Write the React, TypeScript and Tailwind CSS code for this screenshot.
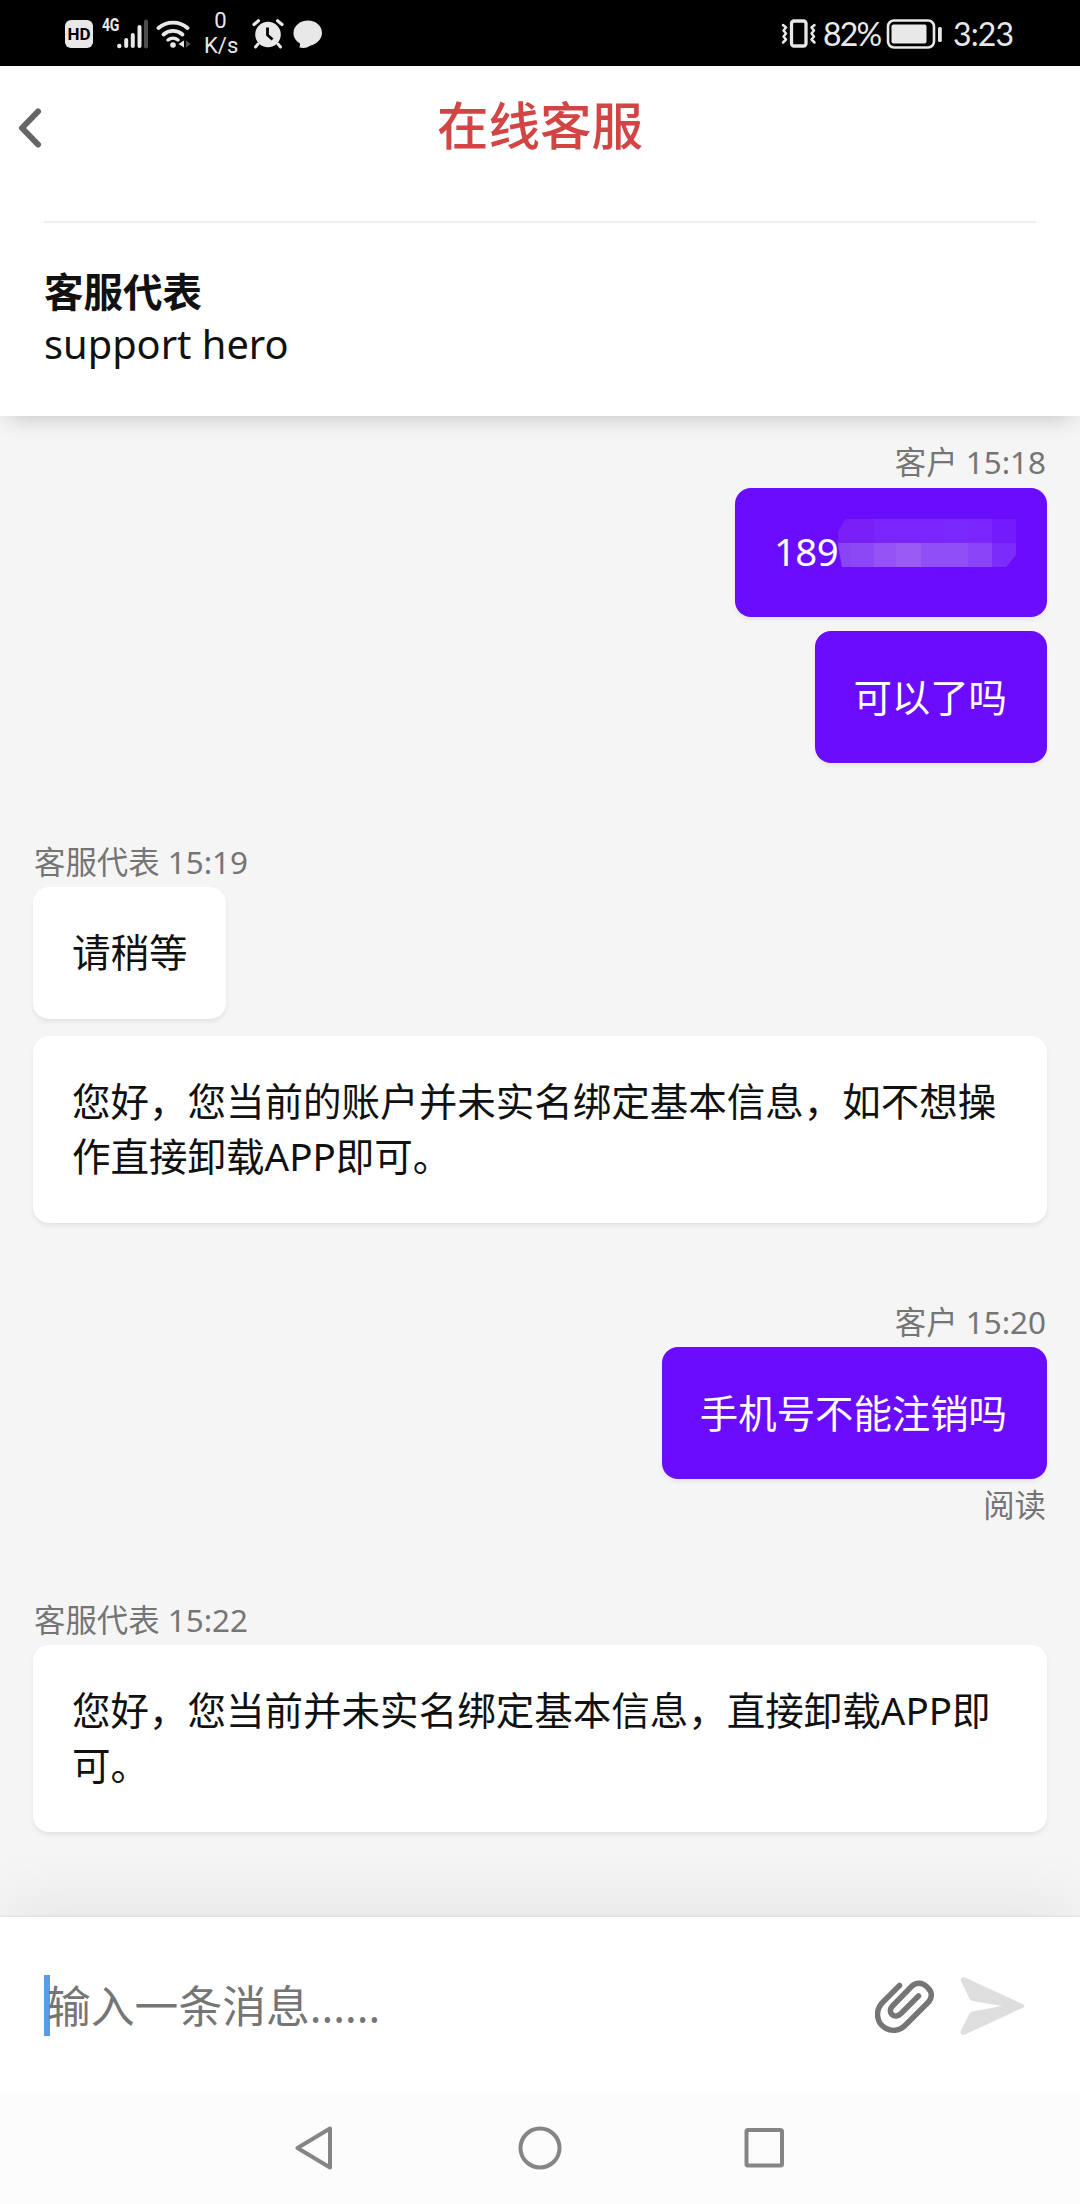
import React from "react";

type Message = {
  text: string;
  masked?: boolean;
};

type Group = {
  author: string;
  time: string;
  mine: boolean;
  status?: string;
  messages: Message[];
};

const groups: Group[] = [
  {
    author: "客户",
    time: "15:18",
    mine: true,
    messages: [{ text: "189", masked: true }, { text: "可以了吗" }],
  },
  {
    author: "客服代表",
    time: "15:19",
    mine: false,
    messages: [
      { text: "请稍等" },
      {
        text: "您好，您当前的账户并未实名绑定基本信息，如不想操作直接卸载APP即可。",
      },
    ],
  },
  {
    author: "客户",
    time: "15:20",
    mine: true,
    status: "阅读",
    messages: [{ text: "手机号不能注销吗" }],
  },
  {
    author: "客服代表",
    time: "15:22",
    mine: false,
    messages: [{ text: "您好，您当前并未实名绑定基本信息，直接卸载APP即可。" }],
  },
];

const StatusBar: React.FC = () => {
  return (
    <div className="flex h-[66px] shrink-0 items-center justify-between bg-black pl-[65px] pr-[65px] text-[#e8e8e8]">
      <div className="flex h-full items-center">
        <div className="mt-[2px] flex h-7 w-7 items-center justify-center rounded-[6px] bg-[#e8e8e8] font-['Roboto',sans-serif] text-[17px] font-bold leading-none text-black">
          HD
        </div>
        <div className="ml-[9px] mb-[16px] w-[15px] origin-left scale-x-[0.78] whitespace-nowrap font-['Roboto',sans-serif] text-[18px] font-bold leading-none tracking-[-0.5px]">
          4G
        </div>
        <svg width="31" height="30" viewBox="0 0 31 30" className="mt-[1px]">
          <circle cx="2.3" cy="27" r="2.2" fill="currentColor" />
          <path
            d="M9.2 21V27M15.8 16V27M22.5 8V27"
            stroke="currentColor"
            strokeWidth="4"
            strokeLinecap="round"
          />
          <path
            d="M29 2.500V27.500"
            stroke="#4d4d4d"
            strokeWidth="4"
            strokeLinecap="round"
          />
        </svg>
        <svg
          width="36"
          height="30"
          viewBox="0 0 36 30"
          className="ml-[8px] mt-[2px]"
          fill="none"
          stroke="currentColor"
          strokeLinecap="round"
        >
          <path d="M2.500 9A22 22 0 0 1 31.500 9" strokeWidth="3.800" />
          <path d="M7.500 15.500A14.500 14.500 0 0 1 26.500 15.500" strokeWidth="3.800" />
          <path d="M12 21A8 8 0 0 1 22 21" strokeWidth="3.500" />
          <circle cx="17" cy="26" r="2.800" fill="currentColor" stroke="none" />
          <path d="M22.500 25L28 21.500V28.500Z" fill="currentColor" stroke="none" />
          <path d="M34.500 25L30 21.500V28.500Z" fill="#555" stroke="none" />
        </svg>
        <div className="ml-[12px] w-[33px] text-center font-['Roboto',sans-serif] text-[22px] leading-[25px]">
          <div>0</div>
          <div>K/s</div>
        </div>
        <svg
          width="32"
          height="30"
          viewBox="0 0 32 30"
          className="ml-[15px] mt-[1px]"
          fill="none"
          stroke="currentColor"
        >
          <circle cx="16" cy="15.500" r="12.800" fill="currentColor" stroke="none" />
          <path d="M2 5.500L6.500 1.800M30 5.500L25.500 1.800" strokeWidth="3.200" strokeLinecap="round" />
          <path d="M6 25L3.500 28M26 25L28.500 28" strokeWidth="3" strokeLinecap="round" />
          <path d="M15.500 8.500V16L20.500 20.500" stroke="#000" strokeWidth="2.800" />
        </svg>
        <svg width="30" height="30" viewBox="0 0 30 30" className="ml-[9px] mt-[1px]">
          <path
            d="M15 1.500C23 1.500 29 7 29 14C29 20.500 23 25.500 17.500 26.500C14 29 10.500 29.500 6.500 28.500C6 28 7.500 26 7 24.500C3 22 .5 18.500 .5 14C.5 7 7 1.500 15 1.500Z"
            fill="currentColor"
          />
        </svg>
      </div>
      <div className="flex h-full items-center pt-[2px] font-['Lato',sans-serif] text-[32px] leading-none">
        <svg
          width="36"
          height="30"
          viewBox="0 0 36 30"
          fill="none"
          stroke="currentColor"
          strokeLinejoin="round"
          strokeLinecap="round"
          className="-ml-[2px]"
        >
          <rect x="10.500" y="2" width="14.500" height="25" rx="2.500" strokeWidth="3.300" />
          <path
            d="M2 6L5 8.500L2.500 11.500L5 14.500L2.500 17.500L5 20.500L2 23.500M33.500 6L30.500 8.500L33 11.500L30.500 14.500L33 17.500L30.500 20.500L33.500 23.500"
            strokeWidth="2.500"
          />
        </svg>
        <span className="ml-[6px] w-[61px] whitespace-nowrap tracking-[-1.8px]">
          82%
        </span>
        <svg width="56" height="32" viewBox="0 0 56 32" className="ml-[2px]" fill="none">
          <rect
            x="2"
            y="2.500"
            width="46"
            height="27"
            rx="6"
            stroke="currentColor"
            strokeWidth="2.600"
          />
          <rect x="5.500" y="6.500" width="35" height="19" rx="2" fill="currentColor" />
          <rect x="52" y="9" width="3.800" height="15" rx="1.500" fill="currentColor" />
        </svg>
        <span className="ml-[11px] w-[62px] whitespace-nowrap tracking-[-0.9px]">
          3:23
        </span>
      </div>
    </div>
  );
};

const Header: React.FC = () => {
  return (
    <div className="relative z-10 h-[350px] shrink-0 bg-white shadow-[0_8px_22px_-8px_rgba(0,0,0,0.24)]">
      <div className="grid h-[118px] grid-cols-[60px_1fr_60px] items-center">
        <svg width="30" height="42" viewBox="0 0 30 42" className="ml-[15px] mt-[6px]">
          <path
            d="M23 4.500L7 21L23 37.500"
            fill="none"
            stroke="#666"
            strokeWidth="6"
            strokeLinecap="round"
            strokeLinejoin="round"
          />
        </svg>
        <h1 className="text-center text-[51.5px] font-medium leading-[72px] text-[#d24545]">
          在线客服
        </h1>
      </div>
      <div className="mx-[44px] mt-[37px] h-[2px] bg-[#efefef]"></div>
      <div className="mt-[44px] px-[44px] text-[#111]">
        <div className="text-[39.5px] font-bold leading-[51px]">客服代表</div>
        <div className="text-[39.8px] leading-[51px]">support hero</div>
      </div>
    </div>
  );
};

// blocks painted over the hidden part of the phone number
const Mosaic: React.FC = () => {
  return (
    <svg
      width="178"
      height="48"
      viewBox="0 0 178 48"
      className="-mr-[8px] mt-[-19px] shrink-0"
      shapeRendering="crispEdges"
    >
      <clipPath id="mask">
        <path d="M8 0H178V36L168 48H4L0 26V12Z" />
      </clipPath>
      <g clipPath="url(#mask)">
        <rect width="178" height="24" fill="#7a26fb" />
        <rect width="36" height="24" fill="#7920f8" />
        <rect x="106" width="24" height="24" fill="#7b28fc" />
        <rect x="154" width="24" height="24" fill="#741bfb" />
        <rect y="24" width="12" height="24" fill="#8945f5" />
        <rect x="12" y="24" width="24" height="24" fill="#8c48f5" />
        <rect x="36" y="24" width="22" height="24" fill="#9553f5" />
        <rect x="58" y="24" width="25" height="24" fill="#9a5af4" />
        <rect x="83" y="24" width="47" height="24" fill="#904ef5" />
        <rect x="130" y="24" width="24" height="24" fill="#8b45f6" />
        <rect x="154" y="24" width="24" height="24" fill="#7c2cfa" />
      </g>
    </svg>
  );
};

const Bubble: React.FC<{ message: Message; mine: boolean }> = ({
  message,
  mine,
}) => {
  if (message.masked) {
    return (
      <div className="mt-px flex h-[129px] items-center rounded-2xl bg-[#6a0dff] px-[39px] text-[38.4px] leading-[52px] text-white shadow-[0_3px_4px_rgba(0,0,0,0.06)]">
        <span className="mt-[-4px] w-[64px] tracking-[-0.6px]">
          {message.text}
        </span>
        <Mosaic />
      </div>
    );
  }
  return (
    <div
      className={
        mine
          ? "rounded-2xl bg-[#6a0dff] pl-[38px] pr-[40px] py-[38px] text-[38.4px] leading-[56px] text-white shadow-[0_3px_4px_rgba(0,0,0,0.06)]"
          : "rounded-2xl bg-white pl-[39px] pr-[38px] py-[38px] text-[38.53px] leading-[55.5px] text-[#111] shadow-[0_3px_4px_rgba(0,0,0,0.07)]"
      }
    >
      {message.text}
    </div>
  );
};

const MessageGroup: React.FC<{ group: Group }> = ({ group }) => {
  return (
    <div className={group.mine ? "flex flex-col items-end" : "flex flex-col items-start"}>
      <div className="h-[48px] px-px text-[31.4px] leading-[45px] text-[#757575]">
        {group.author} {group.time}
      </div>
      <div
        className={
          group.mine
            ? "flex flex-col items-end gap-[14px]"
            : "flex flex-col items-start gap-[17px]"
        }
      >
        {group.messages.map((message) => (
          <Bubble key={message.text} message={message} mine={group.mine} />
        ))}
      </div>
      {group.status && (
        <div className="h-[42px] px-px text-[31.4px] leading-[51px] text-[#757575]">
          {group.status}
        </div>
      )}
    </div>
  );
};

const InputBar: React.FC = () => {
  return (
    <div className="relative flex h-[175px] shrink-0 items-center bg-white pl-[44px] pr-[54px] shadow-[0_-18px_64px_0_rgba(0,0,0,0.06),0_-1px_2px_rgba(0,0,0,0.06)]">
      <div className="mt-px h-[61px] w-[6px] bg-[#5a9be6]"></div>
      <div className="-ml-[3px] mt-[3px] flex-1 text-[43.8px] leading-[60px] text-[#757575]">
        输入一条消息......
      </div>
      <svg
        width="60"
        height="54"
        viewBox="0 0 60 54"
        className="mt-[4px]"
        fill="none"
        stroke="#757575"
        strokeWidth="5.500"
        strokeLinecap="round"
        strokeLinejoin="round"
      >
        <path d="M24.500 5.500L8 22C-1 31 2 44 11 48.500C18 52 25.500 50 30.500 45L53 22.500C57 18.500 57.500 12.500 53.500 8.500L51.500 6.500C47.500 2.200 41 2 37 6L18 25.500C15 28.500 14.500 32 17 34.500C19.500 37 23 36.500 26 33.500L43.500 16" />
      </svg>
      <svg width="66" height="58" viewBox="0 0 66 58" className="ml-[25px] mt-[2px]">
        <path
          d="M5 .6L63.500 27.600Q65.500 29 63.500 30.400L5 57.500Q.5 58.500 .5 54.500L9.500 36.500Q10.500 34.800 12.500 34.500L42 29L12.500 24Q10.500 23.500 9.500 21.500L.8 3.500Q.6 -.6 5 .6Z"
          fill="#dedede"
        />
      </svg>
    </div>
  );
};

const NavBar: React.FC = () => {
  return (
    <div className="relative flex h-[112px] shrink-0 items-center justify-center gap-[181px] bg-[#fcfcfc]">
      <svg width="44" height="44" viewBox="0 0 44 44" fill="none" stroke="#858585" strokeWidth="4" strokeLinejoin="round">
        <path d="M37 2.500V41.500L4.500 22Z" />
      </svg>
      <svg width="44" height="44" viewBox="0 0 44 44" fill="none" stroke="#858585" strokeWidth="4">
        <circle cx="22" cy="22" r="19.500" />
      </svg>
      <svg width="44" height="44" viewBox="0 0 44 44" fill="none" stroke="#858585" strokeWidth="4">
        <rect x="3.500" y="4" width="35.500" height="35.500" rx="1.500" />
      </svg>
    </div>
  );
};

const App: React.FC = () => {
  return (
    <div className="flex h-[2204px] w-[1080px] flex-col overflow-hidden bg-[#f5f5f5] font-['Noto_Sans','Noto_Sans_CJK_SC',sans-serif]">
      <StatusBar />
      <Header />
      <div className="flex flex-1 flex-col gap-[76px] px-[33px] pt-[23px]">
        {groups.map((group) => (
          <MessageGroup key={group.time} group={group} />
        ))}
      </div>
      <InputBar />
      <NavBar />
    </div>
  );
};

export default App;
